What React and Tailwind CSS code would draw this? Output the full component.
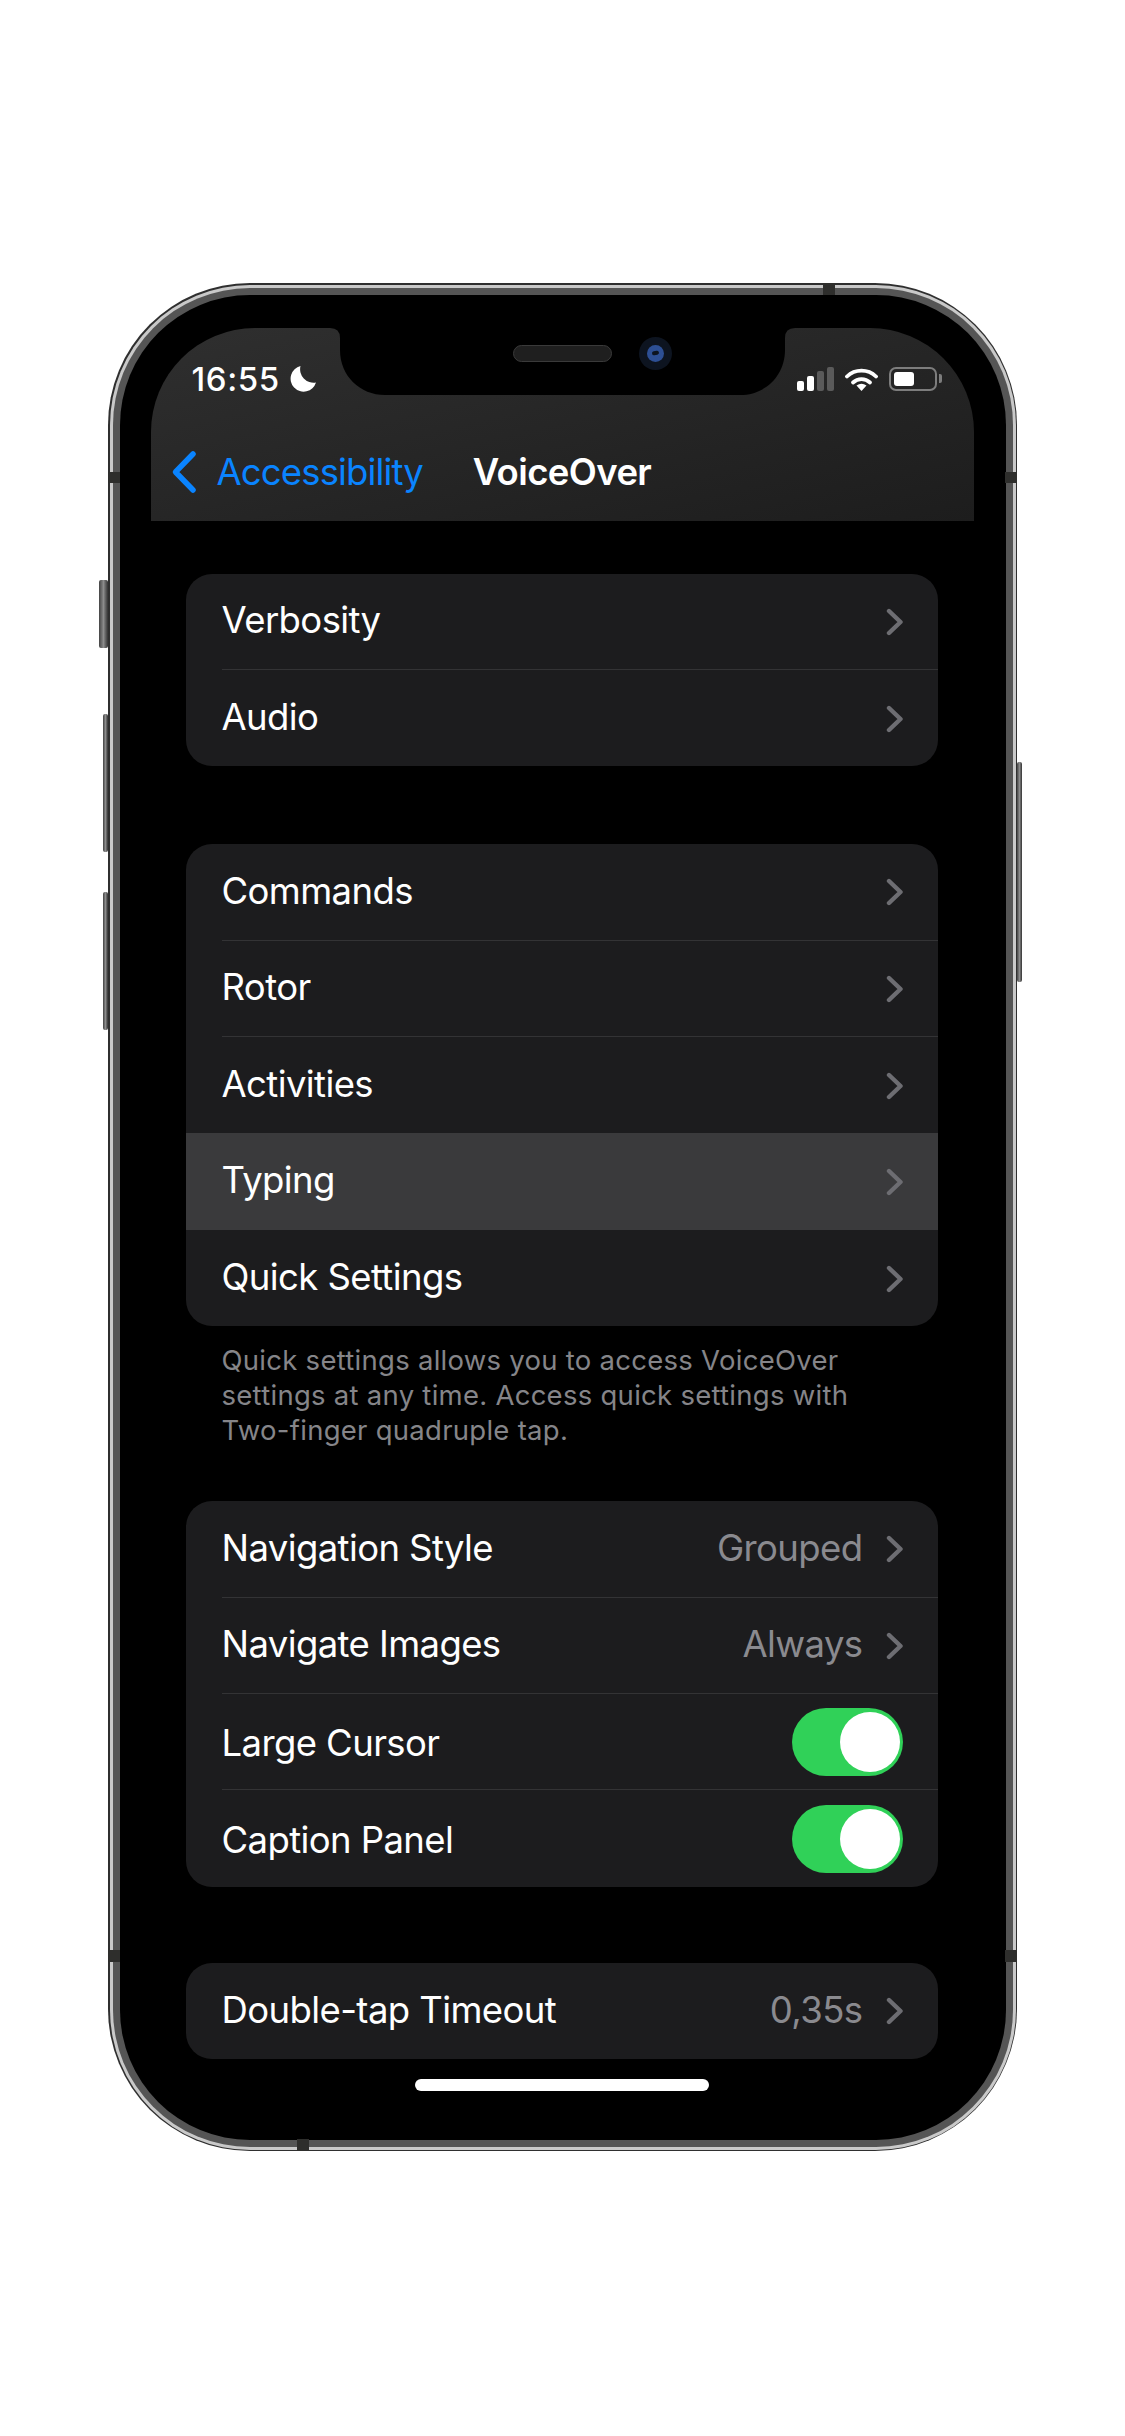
const groups = {
  first: [{ label: 'Verbosity' }, { label: 'Audio' }],
  second: [
    { label: 'Commands' },
    { label: 'Rotor' },
    { label: 'Activities' },
    { label: 'Typing', active: true },
    { label: 'Quick Settings' },
  ],
  third: [
    { label: 'Navigation Style', value: 'Grouped' },
    { label: 'Navigate Images', value: 'Always' },
    { label: 'Large Cursor', toggle: true },
    { label: 'Caption Panel', toggle: true },
  ],
  fourth: [{ label: 'Double-tap Timeout', value: '0,35s' }],
};

const Chevron = () => (
  <svg width="18" height="28" viewBox="0 0 18 28" fill="none" className="shrink-0 mt-[1px] mr-[-1px]">
    <path
      d="M3 3 L14.5 14 L3 25"
      stroke="#6d6d72"
      strokeWidth="4.4"
      strokeLinecap="round"
      strokeLinejoin="round"
    />
  </svg>
);

const Toggle = () => (
  <div className="w-[111px] h-[68px] rounded-full bg-[#30d158] flex items-center justify-end pr-[3px]">
    <div className="w-[60px] h-[60px] rounded-full bg-white" />
  </div>
);

const Row = ({ item, last }) => (
  <div className={`h-[96.4px] pl-[36px] ${item.active ? 'bg-[#3a3a3c]' : ''}`}>
    <div className={`h-full pr-[35px] flex items-center justify-between ${last || item.active ? '' : 'border-b border-[#333335]'}`}>
      <span className={`text-[36.5px] text-white tracking-[-0.6px] ${item.toggle ? 'mt-[3px]' : 'mb-[2px]'}`}>{item.label}</span>
      {item.toggle ? (
        <Toggle />
      ) : (
        <div className="flex items-center gap-[23px]">
          {item.value && <span className="text-[36.5px] text-[#8a8a8f] tracking-[-0.6px] mb-[2px]">{item.value}</span>}
          <Chevron />
        </div>
      )}
    </div>
  </div>
);

const Group = ({ items, className }) => (
  <div className={`rounded-[26px] overflow-hidden bg-[#1c1c1e] ${className}`}>
    {items.map((item, i) => (
      <Row key={item.label} item={item} last={i === items.length - 1 || items[i + 1].active} />
    ))}
  </div>
);

const Moon = () => (
  <svg width="27" height="27" viewBox="0 0 27 27">
    <path d="M10.5 1 A13 13 0 1 0 26 17.5 A13.5 13.5 0 0 1 10.5 1 Z" fill="#fff" />
  </svg>
);

const Signal = () => (
  <div className="flex items-end gap-[3px] h-[24px]">
    <div className="w-[7px] h-[10px] rounded-[2px] bg-white" />
    <div className="w-[7px] h-[15px] rounded-[2px] bg-white" />
    <div className="w-[7px] h-[20px] rounded-[2px] bg-[#5a5a5a]" />
    <div className="w-[7px] h-[24px] rounded-[2px] bg-[#5a5a5a]" />
  </div>
);

const Wifi = () => (
  <svg width="33" height="24" viewBox="0 0 33 24" fill="none">
    <path d="M2 9.5 A21 21 0 0 1 31 9.5" stroke="#fff" strokeWidth="3.8" strokeLinecap="round" />
    <path d="M8 15.5 A12.5 12.5 0 0 1 25 15.5" stroke="#fff" strokeWidth="3.8" strokeLinecap="round" />
    <path d="M16.5 24 L11.5 18.5 Q16.5 15 21.5 18.5 Z" fill="#fff" />
  </svg>
);

const Battery = () => (
  <div className="flex items-center gap-[2px]">
    <div className="w-[48px] h-[24px] rounded-[7px] border-[2px] border-[#7d7d7d] p-[3px]">
      <div className="w-[20px] h-full rounded-[3px] bg-white" />
    </div>
    <div className="w-[3px] h-[9px] rounded-r-[2px] bg-[#7d7d7d]" />
  </div>
);

const Notch = () => (
  <div className="absolute left-[179px] top-0 w-[465px] h-[67px]">
    <svg width="465" height="67" viewBox="0 0 465 67" className="absolute inset-0">
      <path
        d="M0 0 Q10 0 10 10 V22 C10 48 30 67 55 67 H410 C435 67 455 48 455 22 V10 Q455 0 465 0 Z"
        fill="#000"
      />
    </svg>
    <div className="absolute left-[183px] top-[17px] w-[99px] h-[17px] rounded-full bg-[#1f1f1f] border border-[#3a3a3a]" />
    <div className="absolute left-[309px] top-[9px] w-[33px] h-[33px] rounded-full bg-[#0d1420] flex items-center justify-center">
      <div className="w-[17px] h-[17px] rounded-full bg-[#2d4f94] flex items-center justify-center">
        <div className="w-[7px] h-[4px] rounded-full bg-[#0d1420] -rotate-12" />
      </div>
    </div>
  </div>
);

const SideButton = ({ className }) => (
  <div className={`absolute rounded-[2px] bg-linear-to-r from-[#444] via-[#8c8c8c] to-[#333] ${className}`} />
);

const App = () => {
  return (
    <div
      className="w-[1125px] h-[2436px] bg-white pt-[283px] pl-[108px]"
      style={{ fontFamily: 'Inter, "Noto Sans", sans-serif' }}
    >
      <div className="relative w-[909px] h-[1868px]">
        <SideButton className="left-[-9px] top-[297px] w-[9px] h-[68px]" />
        <SideButton className="left-[-5px] top-[431px] w-[5px] h-[138px]" />
        <SideButton className="left-[-5px] top-[609px] w-[5px] h-[138px]" />
        <SideButton className="right-[-5px] top-[479px] w-[5px] h-[220px]" />

        <div className="h-full rounded-[142px] bg-[#2f2f2f] p-[1.5px]">
          <div className="h-full rounded-[140px] bg-[#c9c9c9] p-[3px]">
            <div className="h-full rounded-[137px] bg-[#555555] p-[7px]">
              <div className="h-full rounded-[130px] bg-black pt-[33px] pl-[31px] pr-[32px]">
                <div className="relative rounded-t-[104px] h-[193px] bg-linear-to-br from-[#2f2f2f] to-[#1d1d1d] flex flex-col">
                  <Notch />
                  <div className="flex items-center justify-between pl-[41px] pr-[32px] pt-[37px]">
                    <div className="flex items-center gap-[10px]">
                      <span className="text-[33px] leading-[28px] font-medium text-white tracking-[0.6px]">16:55</span>
                      <Moon />
                    </div>
                    <div className="flex items-center gap-[11px]">
                      <Signal />
                      <Wifi />
                      <Battery />
                    </div>
                  </div>
                  <div className="grid grid-cols-[1fr_auto_1fr] items-center mt-[52px]">
                    <div className="flex items-center gap-[20px] pl-[20px]">
                      <svg width="26" height="44" viewBox="0 0 26 44" fill="none">
                        <path
                          d="M22 4 L4.5 22 L22 40"
                          stroke="#0a84ff"
                          strokeWidth="5.5"
                          strokeLinecap="round"
                          strokeLinejoin="round"
                        />
                      </svg>
                      <span className="text-[36.5px] text-[#0a84ff] tracking-[-0.85px]">Accessibility</span>
                    </div>
                    <span className="text-[36.5px] font-semibold text-white tracking-[-0.6px]">VoiceOver</span>
                    <div />
                  </div>
                </div>

                <div className="pl-[35px] pr-[36px]">
                  <Group items={groups.first} className="mt-[53px]" />
                  <Group items={groups.second} className="mt-[78px]" />
                  <p className="pl-[36px] pr-[30px] pt-[17px] text-[27.5px] leading-[35px] text-[#858589] tracking-[0.27px]">
                    Quick settings allows you to access VoiceOver settings at any time. Access quick settings with Two-finger quadruple tap.
                  </p>
                  <Group items={groups.third} className="mt-[53px]" />
                  <Group items={groups.fourth} className="mt-[76px]" />
                  <div className="mx-auto mt-[20px] w-[294px] h-[12px] rounded-full bg-white" />
                </div>
              </div>
            </div>
          </div>
        </div>

        {/* antenna bands */}
        <div className="absolute left-0 top-[189px] w-[12px] h-[11px] bg-[#2e2e2c]" />
        <div className="absolute right-0 top-[189px] w-[12px] h-[11px] bg-[#2e2e2c]" />
        <div className="absolute left-0 top-[1667px] w-[12px] h-[12px] bg-[#2e2e2c]" />
        <div className="absolute right-0 top-[1667px] w-[12px] h-[12px] bg-[#2e2e2c]" />
        <div className="absolute left-[715px] top-0 w-[12px] h-[12px] bg-[#2e2e2c]" />
        <div className="absolute left-[189px] bottom-0 w-[12px] h-[12px] bg-[#2e2e2c]" />
      </div>
    </div>
  );
};

export default App;
